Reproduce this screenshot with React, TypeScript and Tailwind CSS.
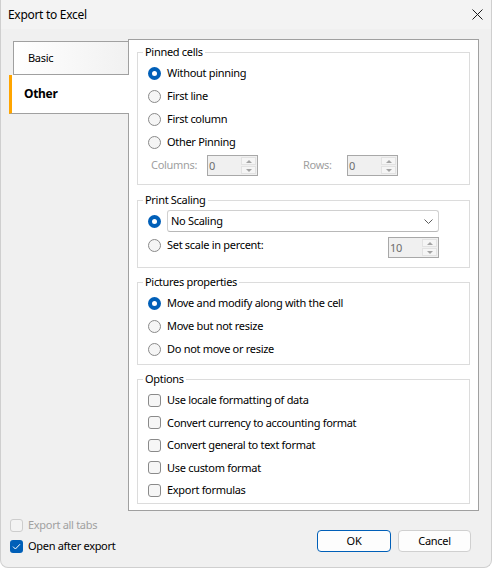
import type { ReactNode } from "react";

function Radio({ checked }: { checked?: boolean }) {
  if (checked) {
    return (
      <span className="flex h-[13px] w-[13px] shrink-0 items-center justify-center rounded-full bg-[#005fb8]">
        <span className="h-[5px] w-[5px] rounded-full bg-white" />
      </span>
    );
  }
  return <span className="h-[13px] w-[13px] shrink-0 rounded-full border border-[#8a8a8a] bg-[#f5f5f5]" />;
}

function Check({ checked, disabled }: { checked?: boolean; disabled?: boolean }) {
  if (checked) {
    return (
      <span className="flex h-[13px] w-[13px] shrink-0 items-center justify-center rounded-[3px] bg-[#005fb8]">
        <svg width="9" height="7" viewBox="0 0 9 7" fill="none">
          <path d="M1 3.6 L3.4 6 L8 1.2" stroke="white" strokeWidth="1" />
        </svg>
      </span>
    );
  }
  return (
    <span
      className={`h-[13px] w-[13px] shrink-0 rounded-[3px] border ${
        disabled ? "border-[#cdcdcd] bg-[#f3f3f3]" : "border-[#8a8a8a] bg-[#f6f6f6]"
      }`}
    />
  );
}

function Group({ title, className, children }: { title: string; className?: string; children: ReactNode }) {
  return (
    <fieldset className={`border border-[#dcdcdc] ${className ?? ""}`}>
      <legend className="ml-[5px] px-[2px] leading-[16px]">{title}</legend>
      {children}
    </fieldset>
  );
}

function Spin({ value }: { value: string }) {
  return (
    <div className="flex h-[21px] w-[51px] shrink-0 border border-[#a8a8a8] bg-[#f0f0f0]">
      <span className="flex-1 pl-[1px] leading-[19px] text-[#6d6d6d]">{value}</span>
      <div className="flex w-[16px] flex-col gap-[1px] py-[1px] pr-[1px]">
        <span className="flex flex-1 items-center justify-center border border-[#e2e2e2] bg-[#f5f5f5]">
          <svg width="6" height="3" viewBox="0 0 6 3">
            <path d="M0 3 L3 0 L6 3Z" fill="#a3a3a3" />
          </svg>
        </span>
        <span className="flex flex-1 items-center justify-center border border-[#e2e2e2] bg-[#f5f5f5]">
          <svg width="6" height="3" viewBox="0 0 6 3">
            <path d="M0 0 L3 3 L6 0Z" fill="#a3a3a3" />
          </svg>
        </span>
      </div>
    </div>
  );
}

function RadioRow({ label, checked }: { label: string; checked?: boolean }) {
  return (
    <div className="flex h-[23px] items-center gap-[6px]">
      <Radio checked={checked} />
      <span>{label}</span>
    </div>
  );
}

function CheckRow({ label }: { label: string }) {
  return (
    <div className="flex h-[22.5px] items-center gap-[6px]">
      <Check />
      <span>{label}</span>
    </div>
  );
}

export default function App() {
  return (
    <div className="flex h-[568px] w-[492px] flex-col overflow-hidden rounded-b-[8px] border-x border-b border-[#cfcfcf] bg-[#f0f0f0] font-['Noto_Sans',sans-serif] text-[11px] tracking-[-0.3px] text-black">
      <div className="flex h-[29px] shrink-0 items-center justify-between bg-[#f3f3f3] pl-[7px] pr-[8px]">
        <span className="text-[12px]">Export to Excel</span>
        <svg width="11" height="11" viewBox="0 0 11 11" fill="none">
          <path d="M0.5 0.5 L10.5 10.5 M10.5 0.5 L0.5 10.5" stroke="#1a1a1a" strokeWidth="1" />
        </svg>
      </div>

      <div className="flex pt-[10px]">
        <div className="flex w-[127px] shrink-0 flex-col pt-[2px]">
          <div className="ml-[12px] flex h-[34px] w-[115px] items-center border-y border-l border-[#a0a0a0] bg-gradient-to-r from-white to-[#f1f1f1] pl-[14px]">
            Basic
          </div>
          <div className="relative z-10 ml-[8px] flex h-[39px] w-[120px] items-center border-b border-l-[3px] border-b-[#a0a0a0] border-l-[#ffa500] bg-white pl-[12px] text-[12px] font-bold">
            Other
          </div>
        </div>

        <div className="flex h-[472px] w-[351px] shrink-0 flex-col border border-[#a0a0a0] bg-white px-[8px] pt-[4px]">
          <Group title="Pinned cells">
            <div className="pb-[7px] pl-[10px] pt-[2px]">
              <RadioRow label="Without pinning" checked />
              <RadioRow label="First line" />
              <RadioRow label="First column" />
              <RadioRow label="Other Pinning" />
              <div className="flex h-[23px] items-center pl-[3px] text-[#a0a0a0]">
                <span className="w-[56px]">Columns:</span>
                <Spin value="0" />
                <span className="ml-[45px] w-[44px]">Rows:</span>
                <Spin value="0" />
              </div>
            </div>
          </Group>

          <Group title="Print Scaling" className="mt-[7px]">
            <div className="pb-[9px] pl-[10px] pr-[30px] pt-[1px]">
              <div className="flex h-[24px] items-center gap-[6px]">
                <Radio checked />
                <div className="flex h-[22px] flex-1 items-center justify-between rounded-[3px] border border-[#d0d0d0] border-b-[#b8b8b8] bg-white pl-[3px] pr-[5px]">
                  <span>No Scaling</span>
                  <svg width="9" height="5" viewBox="0 0 9 5" fill="none">
                    <path d="M0.5 0.5 L4.5 4.5 L8.5 0.5" stroke="#5c5c5c" strokeWidth="1" />
                  </svg>
                </div>
              </div>
              <div className="flex h-[25px] items-center gap-[6px]">
                <Radio />
                <span className="flex-1">Set scale in percent:</span>
                <div className="self-end">
                  <Spin value="10" />
                </div>
              </div>
            </div>
          </Group>

          <Group title="Pictures properties" className="mt-[6px]">
            <div className="pb-[3px] pl-[10px] pt-[2px]">
              <RadioRow label="Move and modify along with the cell" checked />
              <RadioRow label="Move but not resize" />
              <RadioRow label="Do not move or resize" />
            </div>
          </Group>

          <Group title="Options" className="mt-[6px]">
            <div className="pb-[1px] pl-[10px] pt-[2px]">
              <CheckRow label="Use locale formatting of data" />
              <CheckRow label="Convert currency to accounting format" />
              <CheckRow label="Convert general to text format" />
              <CheckRow label="Use custom format" />
              <CheckRow label="Export formulas" />
            </div>
          </Group>
        </div>
      </div>

      <div className="mt-[4px] flex items-end justify-between pr-[20px]">
        <div className="flex flex-col pl-[9px]">
          <div className="flex h-[21px] items-center gap-[5px] text-[#a0a0a0]">
            <Check disabled />
            <span>Export all tabs</span>
          </div>
          <div className="flex h-[21px] items-center gap-[5px]">
            <Check checked />
            <span>Open after export</span>
          </div>
        </div>
        <div className="mb-[5px] flex gap-[7px]">
          <button className="h-[22px] w-[74px] rounded-[4px] border border-[#005fb8] bg-[#fdfdfd]">OK</button>
          <button className="h-[22px] w-[73px] rounded-[4px] border border-[#d0d0d0] bg-[#fdfdfd]">Cancel</button>
        </div>
      </div>
    </div>
  );
}
